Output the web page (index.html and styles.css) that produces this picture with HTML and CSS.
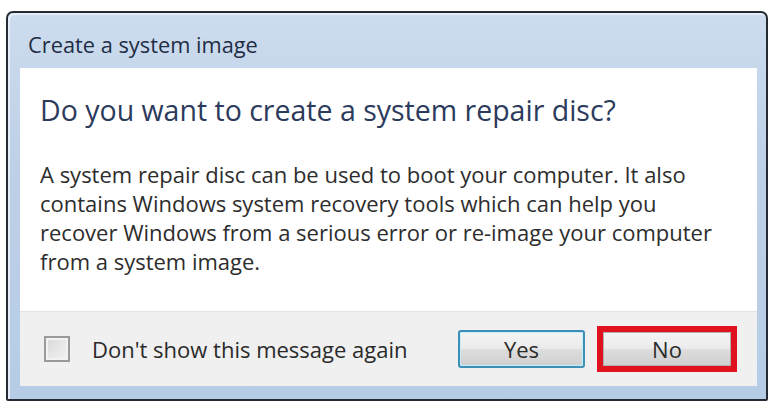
FILE: index.html
```html
<!DOCTYPE html>
<html>
<head>
<meta charset="utf-8">
<link rel="stylesheet" href="styles.css">
</head>
<body>
<div class="dialog">
  <div class="titlebar"><span class="title">Create a system image</span></div>
  <div class="panel">
    <div class="heading">Do you want to create a system repair disc?</div>
    <p class="body">A system repair disc can be used to boot your computer. It also<br>contains Windows system recovery tools which can help you<br>recover Windows from a serious error or re-image your computer<br>from a system image.</p>
  </div>
  <div class="footer">
    <label class="check"><span class="box"></span><span class="label">Don't show this message again</span></label>
    <div class="buttons">
      <button class="btn yes">Yes</button>
      <div class="highlight"><button class="btn no">No</button></div>
    </div>
  </div>
</div>
</body>
</html>
```
FILE: styles.css
```css
html, body { margin: 0; padding: 0; background: #fff; }
body { font-family: "Open Sans", "Noto Sans", sans-serif; }
.dialog {
  box-sizing: border-box;
  margin: 11px 0 0 6px;
  width: 762px;
  height: 390px;
  border: 2px solid #262b33;
  border-radius: 7px 7px 2px 2px;
  background: linear-gradient(#cddcee, #bed0e7 40%, #b6cce6);
  padding: 0 9px 13px 12px;
  display: flex;
  flex-direction: column;
  box-shadow: inset 2px 2px 0 #e4edf8;
}
.titlebar {
  height: 55px;
  display: flex;
  align-items: center;
  padding-left: 8px;
  padding-top: 8px;
  box-sizing: border-box;
}
.title { font-size: 21.8px; color: #1f2d45; }
.panel {
  flex: 1;
  background: #fff;
  padding: 24px 20px 0 20px;
}
.heading { font-size: 28.5px; color: #2c3b5c; line-height: 36px; }
.body { margin: 32px 0 0 0; font-size: 22px; line-height: 29px; color: #2d2d2d; }
.footer {
  height: 75px;
  background: #f0f0f0;
  border-top: 1px solid #e2e2e2;
  display: flex;
  align-items: center;
  justify-content: space-between;
  padding: 0 20px 0 24px;
  box-sizing: border-box;
}
.check { display: flex; align-items: center; gap: 22px; }
.box {
  width: 22px; height: 22px;
  border: 2px solid #9a9a9a;
  background: linear-gradient(135deg, #d8d8d8, #f4f4f4);
  box-shadow: inset 0 0 0 2px #f2f2f2;
}
.label { font-size: 22px; color: #2a2a2a; }
.buttons { display: flex; align-items: center; gap: 12px; }
.btn {
  font-family: inherit;
  font-size: 22px;
  color: #2a2a2a;
  border-radius: 3px;
  background: linear-gradient(#f4f4f4, #ebebeb 48%, #dddddd 52%, #cfcfcf);
  padding: 0;
}
.yes {
  width: 127px; height: 38px;
  border: 2px solid #3d8fb5;
  box-shadow: inset 0 0 0 1px #c7eefb;
}
.highlight {
  border: 6px solid #e0121e;
  width: 128px; height: 34px;
}
.no {
  width: 128px; height: 34px;
  border: 1px solid #b0b0b0;
  border-radius: 0;
  display: block;
}
```
